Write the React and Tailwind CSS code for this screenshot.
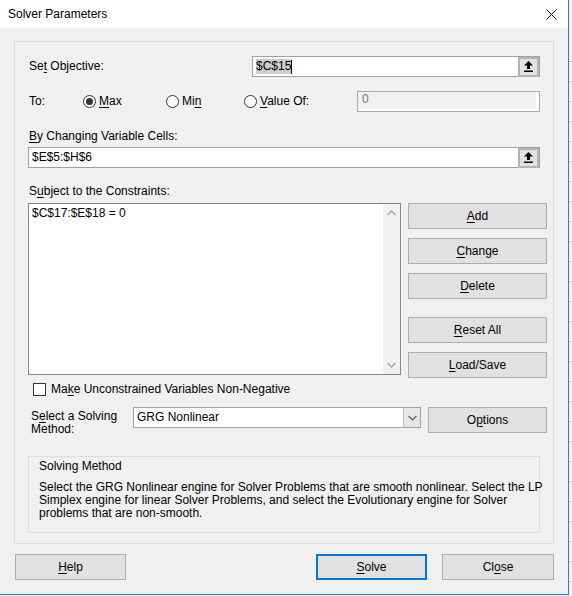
import React from "react";

const font = { fontFamily: '"Liberation Sans", Arial, sans-serif' };

function U({ children }) {
  return <span className="underline underline-offset-[2px] decoration-1">{children}</span>;
}

function RefButton() {
  // the little range-picker button inside the cell inputs
  return (
    <div className="w-[21px] h-[20px] border-2 border-[#b4b4b4] bg-[#e1e1e1] flex items-center justify-center">
      <svg width="9" height="11" viewBox="0 0 9 11">
        <path d="M4.5 0 L9 4.5 L6 4.5 L6 8 L3 8 L3 4.5 L0 4.5 Z" fill="#000" />
        <rect x="0" y="9.5" width="9" height="1.5" fill="#000" />
      </svg>
    </div>
  );
}

function Radio({ checked, children, className }) {
  return (
    <div className={"flex items-center " + (className || "")}>
      <div className="w-[13px] h-[13px] rounded-full border border-[#333] bg-white flex items-center justify-center">
        {checked && <div className="w-[7px] h-[7px] rounded-full bg-[#333]" />}
      </div>
      <span className="ml-[3px]">{children}</span>
    </div>
  );
}

function Btn({ children, className, primary }) {
  return (
    <div
      className={
        "h-[26px] flex items-center justify-center bg-[#e1e1e1] text-black " +
        (primary ? "border-2 border-[#0078d7] " : "border border-[#adadad] ") +
        (className || "")
      }
    >
      <span>{children}</span>
    </div>
  );
}

export default function App() {
  return (
    <div className="w-[572px] h-[596px] flex bg-[#e8e8e8] text-[12px] leading-[15px] text-black" style={font}>
      {/* dialog */}
      <div className="w-[569px] h-[595px] flex flex-col bg-[#f0f0f0] border-r border-b border-[#2f7fc0]">
        {/* title bar */}
        <div className="h-[28px] bg-white flex items-center pl-[8px] pr-[11px]">
          <span className="text-[12px]">Solver Parameters</span>
          <svg className="ml-auto" width="11" height="11" viewBox="0 0 11 11">
            <path d="M0.5 0.5 L10.5 10.5 M10.5 0.5 L0.5 10.5" stroke="#000" strokeWidth="1" />
          </svg>
        </div>

        {/* main group panel */}
        <div className="mt-[13px] ml-[14px] w-[540px] h-[503px] border border-[#dcdcdc] flex flex-col pl-[13px]">
          {/* objective */}
          <div className="mt-[14px] h-[21px] flex items-center">
            <span className="w-[224px] pl-[1px]">
              Se<U>t</U> Objective:
            </span>
            <div className="w-[288px] h-[21px] border border-[#a0a0a0] bg-white flex items-center">
              <span className="ml-[3px] bg-[#cccccc] leading-[15px]">$C$15</span>
              <span className="w-px h-[14px] bg-black" />
              <div className="ml-auto">
                <RefButton />
              </div>
            </div>
          </div>

          {/* To: */}
          <div className="mt-[14px] h-[21px] flex items-center">
            <span className="w-[55px] pl-[1px]">To:</span>
            <Radio checked className="w-[83px]">
              <U>M</U>ax
            </Radio>
            <Radio className="w-[78px]">
              Mi<U>n</U>
            </Radio>
            <Radio className="w-[113px]">
              <U>V</U>alue Of:
            </Radio>
            <div className="w-[183px] h-[21px] border border-[#a9a9a9] bg-white flex">
              <div className="flex-1 mr-[3px] mb-[2px] bg-[#f0f0f0] pl-[4px] text-[#7a7a7a]">0</div>
            </div>
          </div>

          {/* changing cells */}
          <div className="mt-[17px] pl-[1px]">
            <U>B</U>y Changing Variable Cells:
          </div>
          <div className="mt-[3px] w-[512px] h-[21px] border border-[#a0a0a0] bg-white flex items-center">
            <span className="ml-[3px]">$E$5:$H$6</span>
            <div className="ml-auto">
              <RefButton />
            </div>
          </div>

          {/* constraints */}
          <div className="mt-[16px] pl-[1px]">
            S<U>u</U>bject to the Constraints:
          </div>
          <div className="mt-[4px] flex items-start">
            <div className="w-[373px] h-[172px] border border-[#828790] bg-white flex">
              <div className="flex-1 pl-[3px] pt-[2px]">$C$17:$E$18 = 0</div>
              <div className="w-[17px] bg-[#f0f0f0] flex flex-col items-center justify-between py-[6px]">
                <svg width="9" height="6" viewBox="0 0 9 6">
                  <path d="M0.5 5 L4.5 1 L8.5 5" stroke="#a6a6a6" strokeWidth="1.4" fill="none" />
                </svg>
                <svg width="9" height="6" viewBox="0 0 9 6">
                  <path d="M0.5 1 L4.5 5 L8.5 1" stroke="#a6a6a6" strokeWidth="1.4" fill="none" />
                </svg>
              </div>
            </div>
            <div className="ml-[7px] w-[139px] flex flex-col">
              <Btn>
                <U>A</U>dd
              </Btn>
              <Btn className="mt-[9px]">
                <U>C</U>hange
              </Btn>
              <Btn className="mt-[9px]">
                <U>D</U>elete
              </Btn>
              <Btn className="mt-[18px]">
                <U>R</U>eset All
              </Btn>
              <Btn className="mt-[9px]">
                <U>L</U>oad/Save
              </Btn>
            </div>
          </div>

          {/* non-negative */}
          <div className="mt-[5px] h-[13px] flex items-center pl-[5px]">
            <div className="w-[13px] h-[13px] border border-[#333] bg-white" />
            <span className="ml-[5px]">
              Ma<U>k</U>e Unconstrained Variables Non-Negative
            </span>
          </div>

          {/* solving method */}
          <div className="mt-[11px] flex items-start">
            <div className="w-[105px] pl-[3px] pt-[3px] leading-[12.5px]">
              S<U>e</U>lect a Solving
              <br />
              Method:
            </div>
            <div className="w-[288px] h-[21px] border border-[#a0a0a0] bg-white flex items-center">
              <span className="ml-[3px]">GRG Nonlinear</span>
              <div className="ml-auto w-[17px] h-full bg-[#e6e6e6] border-l border-[#c8c8c8] flex items-center justify-center">
                <svg width="9" height="6" viewBox="0 0 9 6">
                  <path d="M0.5 1 L4.5 5 L8.5 1" stroke="#606060" strokeWidth="1.2" fill="none" />
                </svg>
              </div>
            </div>
            <Btn className="ml-[7px] w-[119px]">
              O<U>p</U>tions
            </Btn>
          </div>

          {/* description group */}
          <div className="mt-[21px] w-[512px] h-[77px] border border-[#dcdcdc] pl-[10px] pt-[2px]">
            <div>Solving Method</div>
            <div className="mt-[7px] leading-[13px] whitespace-nowrap">
              Select the GRG Nonlinear engine for Solver Problems that are smooth nonlinear. Select the LP
              <br />
              Simplex engine for linear Solver Problems, and select the Evolutionary engine for Solver
              <br />
              problems that are non-smooth.
            </div>
          </div>
        </div>

        {/* footer */}
        <div className="mt-[10px] flex pl-[15px]">
          <Btn className="w-[111px]">
            <U>H</U>elp
          </Btn>
          <Btn primary className="ml-[190px] w-[111px]">
            <U>S</U>olve
          </Btn>
          <Btn className="ml-[15px] w-[112px]">
            Cl<U>o</U>se
          </Btn>
        </div>
      </div>

      {/* sliver of the worksheet behind the dialog */}
      <div className="flex-1 flex flex-col bg-[#f4f4f4]">
        <div className="h-[62px] border-b border-[#c6c6c6]" />
        {Array.from({ length: 26 }).map((_, i) => (
          <div key={i} className="h-[20px] border-b border-[#d4d4d4]" />
        ))}
      </div>
    </div>
  );
}
